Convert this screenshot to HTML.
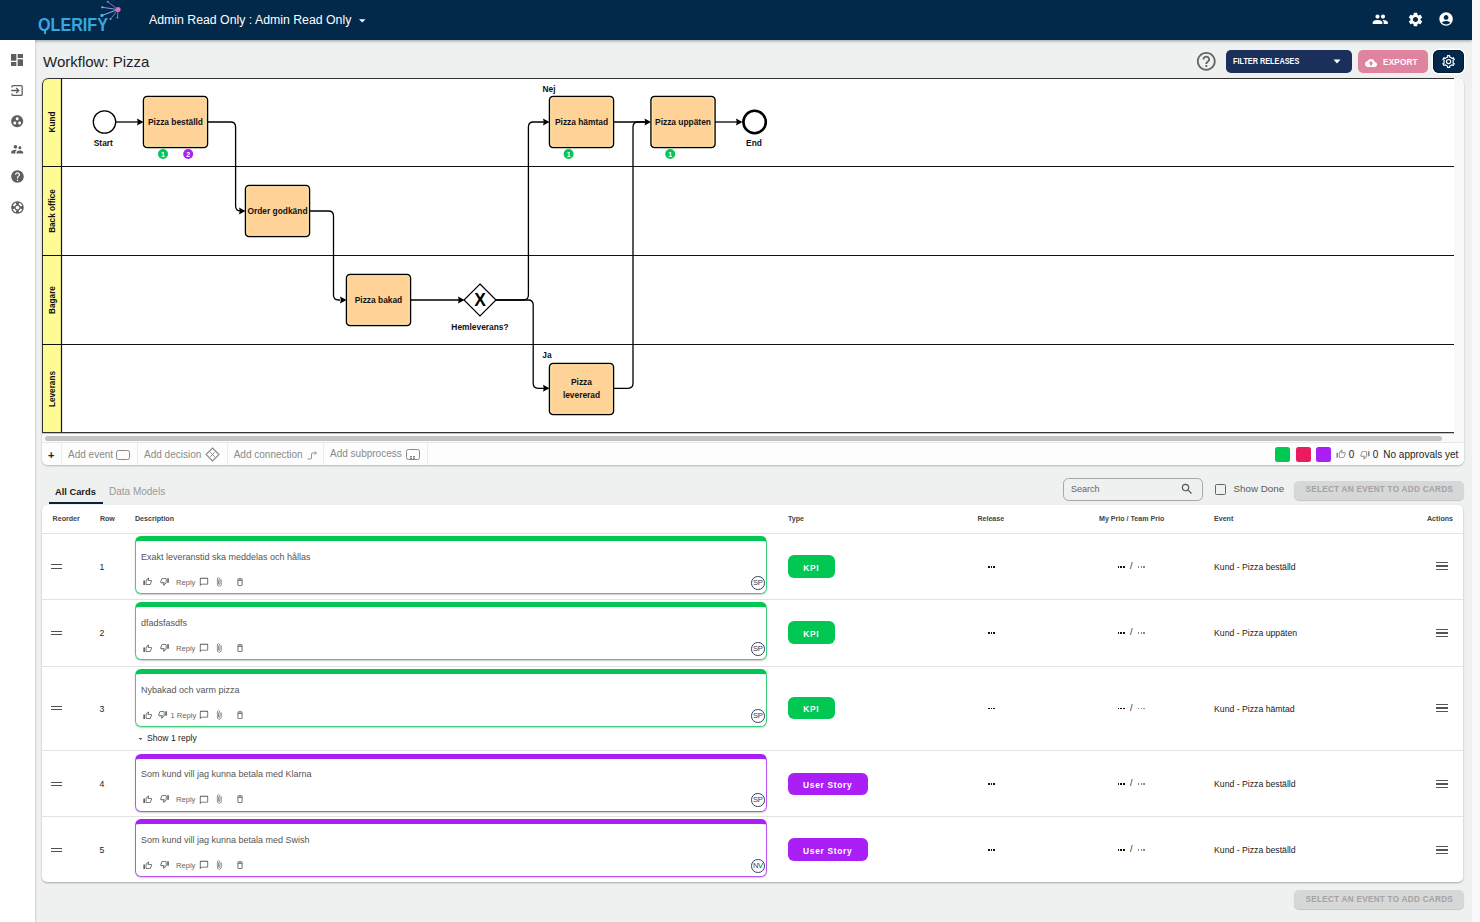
<!DOCTYPE html>
<html><head><meta charset="utf-8">
<style>
*{box-sizing:border-box;margin:0;padding:0}
html,body{-webkit-font-smoothing:antialiased;width:1480px;height:922px;overflow:hidden;background:#eff0f0;font-family:"Liberation Sans",sans-serif;color:#222;position:relative}
.abs{position:absolute}
.nowrap{white-space:nowrap}
#hdr{position:absolute;left:0;top:0;width:1472px;height:40px;background:#03294a;box-shadow:0 1px 3px rgba(0,0,0,.35);z-index:2}
#strip{position:absolute;left:1472px;top:0;width:8px;height:922px;background:#f9f9f9;z-index:3}
#side{position:absolute;left:0;top:40px;width:35px;height:882px;background:#fff;box-shadow:1px 0 2px rgba(0,0,0,.12);z-index:3}
.tb{font-size:10px;line-height:12px;color:#8a8a8a}
.btxt{font-size:8.2px;line-height:10px;font-weight:bold;color:#a3a3a3;letter-spacing:0.26px}
.th{font-size:7.1px;line-height:10px;font-weight:bold;color:#444}
.td{font-size:8.7px;line-height:10px;color:#222}
.ct{font-size:9px;line-height:10px;color:#555}
.rp{font-size:7.6px;line-height:10px;color:#666}
.sr{font-size:8.6px;line-height:10px;color:#222}
.av{width:13.5px;height:13.5px;border:1.1px solid #2b4160;border-radius:50%;font-size:7.6px;line-height:11.3px;text-align:center;color:#2b4160;letter-spacing:-0.4px}
.chip{height:22.5px;border-radius:6px;color:#fff;font-weight:bold;font-size:8.4px;line-height:22.5px;padding-top:1.5px;text-align:center;letter-spacing:0.7px}
.dots{height:2px;width:8px}
.dots i{position:absolute;top:0;width:1.5px;height:1.7px;background:#111}
.dots i:nth-child(1){left:0}.dots i:nth-child(2){left:2.7px}.dots i:nth-child(3){left:5.4px}
.dots.g i{background:#888;width:1.3px}

</style></head>
<body>
<div id="strip"></div>
<div id="hdr">
  <div class="abs nowrap" style="left:37.5px;top:13px;font-size:19px;font-weight:bold;color:#3aa6e0;line-height:24px;transform:scaleX(0.85);transform-origin:0 0">OLERIFY</div>
  <div class="abs" style="left:43.6px;top:30px;width:2.4px;height:3.6px;background:#3aa6e0"></div>
  <svg class="abs" style="left:95px;top:0" width="30" height="25" viewBox="95 0 30 25">
    <g stroke-linecap="round">
      <line x1="118" y1="9.6" x2="107.7" y2="1.6" stroke="#8a6fc0" stroke-width="1"/>
      <line x1="118" y1="9.6" x2="102.3" y2="7.3" stroke="#7f9be0" stroke-width="1"/>
      <line x1="118" y1="9.6" x2="101.8" y2="15.5" stroke="#7fa5e6" stroke-width="1.1"/>
      <line x1="118" y1="9.6" x2="110.5" y2="19" stroke="#6f86d0" stroke-width="0.9"/>
      <line x1="118" y1="9.6" x2="117.5" y2="17.6" stroke="#9a6fc0" stroke-width="0.9"/>
    </g>
    <circle cx="107.7" cy="1.8" r="1" fill="#9d7fd0"/>
    <circle cx="102.3" cy="7.3" r="1.1" fill="#8fb0f0"/>
    <circle cx="101.9" cy="15.4" r="1.6" fill="#45b4f0"/>
    <circle cx="110.5" cy="19" r="0.9" fill="#8fa5e6"/>
    <circle cx="117.5" cy="17.6" r="0.9" fill="#b98ad6"/>
    <circle cx="118.1" cy="9.6" r="2.5" fill="#e06cb5"/>
  </svg>
  <div class="abs nowrap" style="left:149px;top:12px;font-size:12.3px;color:#fff;line-height:16px">Admin Read Only : Admin Read Only</div>
  <svg class="abs" style="left:358.5px;top:19px" width="7" height="4" viewBox="0 0 7 4"><path d="M0 0.2h6.5L3.25 3.5z" fill="#fff"/></svg>
  <!-- people -->
  <svg class="abs" style="left:1371.5px;top:11px" width="16.5" height="16.5" viewBox="0 0 24 24"><path fill="#fff" d="M16 11c1.66 0 2.99-1.34 2.99-3S17.66 5 16 5c-1.66 0-3 1.34-3 3s1.34 3 3 3zm-8 0c1.66 0 2.99-1.34 2.99-3S9.66 5 8 5C6.34 5 5 6.34 5 8s1.34 3 3 3zm0 2c-2.33 0-7 1.17-7 3.5V19h14v-2.5c0-2.33-4.67-3.5-7-3.5zm8 0c-.29 0-.62.02-.97.05 1.16.84 1.97 1.97 1.97 3.45V19h6v-2.5c0-2.33-4.67-3.5-7-3.5z"/></svg>
  <!-- gear -->
  <svg class="abs" style="left:1406.5px;top:10.5px" width="17" height="17" viewBox="0 0 24 24"><path fill="#fff" d="M19.14 12.94c.04-.3.06-.61.06-.94 0-.32-.02-.64-.07-.94l2.03-1.58c.18-.14.23-.41.12-.61l-1.92-3.32c-.12-.22-.37-.29-.59-.22l-2.39.96c-.5-.38-1.03-.7-1.62-.94l-.36-2.54c-.04-.24-.24-.41-.48-.41h-3.84c-.24 0-.43.17-.47.41l-.36 2.54c-.59.24-1.13.57-1.62.94l-2.39-.96c-.22-.08-.47 0-.59.22L2.74 8.87c-.12.21-.08.47.12.61l2.03 1.58c-.05.3-.09.63-.09.94s.02.64.07.94l-2.03 1.58c-.18.14-.23.41-.12.61l1.92 3.32c.12.22.37.29.59.22l2.39-.96c.5.38 1.03.7 1.62.94l.36 2.54c.05.24.24.41.48.41h3.84c.24 0 .44-.17.47-.41l.36-2.54c.59-.24 1.13-.56 1.62-.94l2.39.96c.22.08.47 0 .59-.22l1.92-3.32c.12-.22.07-.47-.12-.61l-2.01-1.58zM12 15.6c-1.98 0-3.6-1.62-3.6-3.6s1.62-3.6 3.6-3.6 3.6 1.62 3.6 3.6-1.62 3.6-3.6 3.6z"/></svg>
  <!-- account -->
  <svg class="abs" style="left:1437.8px;top:11px" width="16.2" height="16.2" viewBox="0 0 24 24"><path fill="#fff" d="M12 2C6.48 2 2 6.48 2 12s4.48 10 10 10 10-4.48 10-10S17.52 2 12 2zm0 4c1.93 0 3.5 1.57 3.5 3.5S13.93 13 12 13s-3.5-1.57-3.5-3.5S10.07 6 12 6zm0 14c-2.03 0-4.43-.82-6.14-2.88C7.55 15.8 9.68 15 12 15s4.45.8 6.14 2.12C16.43 19.18 14.03 20 12 20z"/></svg>
</div>

<div id="side">
  <svg class="abs" style="left:9px;top:12px" width="16" height="16" viewBox="0 0 24 24"><path fill="#5f5f5f" d="M3 13h8V3H3v10zm0 8h8v-6H3v6zm10 0h8V11h-8v10zm0-18v6h8V3h-8z"/></svg>
  <svg class="abs" style="left:10px;top:44px" width="14" height="13" viewBox="10 84 14 13"><path d="M12 87.6 V86.5 Q12 85.6 12.9 85.6 H21.3 Q22.2 85.6 22.2 86.5 V94.5 Q22.2 95.4 21.3 95.4 H12.9 Q12 95.4 12 94.5 V93.4" fill="none" stroke="#5f5f5f" stroke-width="1.3"/><path d="M11.2 90.5 H18.6 M16.2 88 L18.8 90.5 L16.2 93" fill="none" stroke="#5f5f5f" stroke-width="1.3"/></svg>
  <svg class="abs" style="left:9.8px;top:73.8px" width="14.4" height="14.4" viewBox="0 0 24 24"><path fill="#5f5f5f" d="M12 2C6.48 2 2 6.48 2 12s4.48 10 10 10 10-4.48 10-10S17.52 2 12 2zM8 17.5c-1.38 0-2.5-1.12-2.5-2.5s1.12-2.5 2.5-2.5 2.5 1.12 2.5 2.5-1.12 2.5-2.5 2.5zM9.5 8c0-1.38 1.12-2.5 2.5-2.5s2.5 1.12 2.5 2.5-1.12 2.5-2.5 2.5S9.5 9.38 9.5 8zm6.5 9.5c-1.38 0-2.5-1.12-2.5-2.5s1.12-2.5 2.5-2.5 2.5 1.12 2.5 2.5-1.12 2.5-2.5 2.5z"/></svg>
  <svg class="abs" style="left:9.8px;top:101.5px" width="14.4" height="14.4" viewBox="0 0 24 24"><path fill="#5f5f5f" d="M16.5 12c1.38 0 2.49-1.12 2.49-2.5S17.88 7 16.5 7C15.12 7 14 8.12 14 9.5s1.12 2.5 2.5 2.5zM9 11c1.66 0 2.99-1.34 2.99-3S10.66 5 9 5C7.34 5 6 6.34 6 8s1.34 3 3 3zm7.5 3c-1.83 0-5.5.92-5.5 2.75V19h11v-2.25c0-1.83-3.67-2.75-5.5-2.75zM9 13c-2.33 0-7 1.17-7 3.5V19h7v-2.25c0-.85.33-2.34 2.37-3.47C10.5 13.1 9.66 13 9 13z"/></svg>
  <svg class="abs" style="left:9.5px;top:129px" width="15" height="15" viewBox="0 0 24 24"><path fill="#5f5f5f" d="M12 2C6.48 2 2 6.48 2 12s4.48 10 10 10 10-4.48 10-10S17.52 2 12 2zm1 17h-2v-2h2v2zm2.07-7.75l-.9.92C13.45 12.9 13 13.5 13 15h-2v-.5c0-1.1.45-2.1 1.170-2.83l1.24-1.26c.37-.36.59-.86.59-1.41 0-1.1-.9-2-2-2s-2 .9-2 2H8c0-2.21 1.79-4 4-4s4 1.79 4 4c0 .88-.36 1.68-.93 2.25z"/></svg>
  <svg class="abs" style="left:9.5px;top:159.5px" width="15" height="15" viewBox="0 0 24 24"><path fill="#5f5f5f" d="M12 2C6.48 2 2 6.48 2 12s4.48 10 10 10 10-4.48 10-10S17.52 2 12 2zm7.46 7.12l-2.78 1.15c-.51-1.36-1.58-2.440-2.95-2.94l1.15-2.78c2.1.8 3.770 2.47 4.58 4.57zM12 15c-1.66 0-3-1.34-3-3s1.34-3 3-3 3 1.34 3 3-1.34 3-3 3zM9.13 4.54l1.17 2.78c-1.38.5-2.47 1.59-2.98 2.97L4.54 9.13c.81-2.11 2.48-3.78 4.59-4.59zM4.54 14.87l2.78-1.15c.51 1.38 1.59 2.46 2.97 2.96l-1.17 2.78c-2.1-.81-3.77-2.48-4.58-4.59zm10.34 4.59l-1.15-2.78c1.37-.51 2.45-1.59 2.95-2.97l2.78 1.17c-.81 2.1-2.48 3.77-4.58 4.58z"/></svg>
</div>

<div class="abs nowrap" style="left:43px;top:52px;font-size:15px;line-height:20px;color:#222">Workflow: Pizza</div>
<svg class="abs" style="left:1195.4px;top:49.9px" width="22.6" height="22.6" viewBox="0 0 24 24"><path fill="#666" d="M11 18h2v-2h-2v2zm1-16C6.48 2 2 6.48 2 12s4.48 10 10 10 10-4.48 10-10S17.52 2 12 2zm0 18c-4.41 0-8-3.59-8-8s3.59-8 8-8 8 3.59 8 8-3.590 8-8 8zm0-14c-2.21 0-4 1.79-4 4h2c0-1.1.9-2 2-2s2 .9 2 2c0 2-3 1.75-3 5h2c0-2.25 3-2.5 3-5 0-2.21-1.79-4-4-4z"/></svg>
<div class="abs" style="left:1226px;top:50px;width:126px;height:23px;background:#1b2f5b;border-radius:5px"></div>
<div class="abs nowrap" style="left:1233.3px;top:57.3px;font-size:8.2px;line-height:10px;font-weight:bold;color:#fff;letter-spacing:0px;transform:scaleX(0.89);transform-origin:0 0">FILTER RELEASES</div>
<svg class="abs" style="left:1333px;top:59px" width="8" height="5" viewBox="0 0 8 5"><path d="M0.5 0.5h7L4 4.5z" fill="#fff"/></svg>
<div class="abs" style="left:1358px;top:50px;width:70px;height:23px;background:#e0839f;border-radius:5px"></div>
<svg class="abs" style="left:1365px;top:56.6px" width="12" height="12" viewBox="0 0 24 24"><path fill="#fff" d="M19.35 10.04C18.67 6.59 15.64 4 12 4 9.11 4 6.6 5.64 5.35 8.04 2.34 8.36 0 10.91 0 14c0 3.31 2.69 6 6 6h13c2.76 0 5-2.24 5-5 0-2.64-2.05-4.78-4.65-4.96zM14 13v4h-4v-4H7l5-5 5 5h-3z"/></svg>
<div class="abs nowrap" style="left:1382.7px;top:56.8px;font-size:8.9px;line-height:10px;font-weight:bold;color:#fff;letter-spacing:0.15px;transform:scaleX(0.93);transform-origin:0 0">EXPORT</div>
<div class="abs" style="left:1433px;top:50px;width:30.5px;height:23px;background:#03294a;border-radius:6px;box-shadow:0 0 0 1.4px #fff, inset 0 0 0 1px #001c36"></div>
<svg class="abs" style="left:1441.7px;top:54.7px" width="13.2" height="13.2" viewBox="0 0 13.2 13.2"><path d="M4.73 2.40 L5.57 2.12 L5.54 0.59 L7.66 0.59 L7.63 2.12 L8.47 2.40 L9.30 2.88 L9.96 3.46 L11.27 2.68 L12.33 4.51 L11.00 5.26 L11.17 6.12 L11.17 7.08 L11.00 7.94 L12.33 8.69 L11.27 10.52 L9.96 9.74 L9.30 10.32 L8.47 10.80 L7.63 11.08 L7.66 12.61 L5.54 12.61 L5.57 11.08 L4.73 10.80 L3.90 10.32 L3.24 9.74 L1.93 10.52 L0.87 8.69 L2.20 7.94 L2.03 7.08 L2.03 6.12 L2.20 5.26 L0.87 4.51 L1.93 2.68 L3.24 3.46 L3.90 2.88 Z" fill="none" stroke="#fff" stroke-width="1.15" stroke-linejoin="round"/><circle cx="6.6" cy="6.6" r="2.1" fill="none" stroke="#fff" stroke-width="1.15"/></svg>

<div class="abs" style="left:42px;top:78px;width:1421.5px;height:387px;background:#f9f9f9;border-radius:6px;box-shadow:0 1px 2px rgba(0,0,0,.25)"></div>
<div class="abs" style="left:42px;top:443px;width:1421.5px;height:22px;background:#fdfdfd;border-radius:0 0 6px 6px"></div>
<svg class="abs" style="left:42px;top:78px" width="1412" height="356" viewBox="42 78 1412 356" font-family="Liberation Sans, sans-serif">
  <path d="M42 84.5 Q42 78 48.5 78 H1454 V433 H42 Z" fill="#fff"/>
  <path d="M42.5 432.5 V85 Q42.5 78.5 49 78.5 H61.5 V432.5 Z" fill="#fffb94"/>
  <g stroke="#111" fill="none">
    <path d="M42.5 432.5 V85 Q42.5 78.5 49 78.5 H1454" stroke="#333" stroke-width="1"/>
    <line x1="61.5" y1="78.5" x2="61.5" y2="432.5" stroke-width="1.2"/>
    <line x1="42" y1="166.5" x2="1454" y2="166.5" stroke-width="1.2"/>
    <line x1="42" y1="255.5" x2="1454" y2="255.5" stroke-width="1.2"/>
    <line x1="42" y1="344.5" x2="1454" y2="344.5" stroke-width="1.2"/>
    <line x1="42" y1="432.6" x2="1454" y2="432.6" stroke="#333" stroke-width="1.2"/>
  </g>
  <g font-weight="bold" font-size="8.2" fill="#111" text-anchor="middle">
    <text transform="translate(55.3 122) rotate(-90)">Kund</text>
    <text transform="translate(55.3 211) rotate(-90)">Back office</text>
    <text transform="translate(55.3 300) rotate(-90)">Bagare</text>
    <text transform="translate(55.3 389) rotate(-90)">Leverans</text>
  </g>
  <!-- connectors -->
  <g stroke="#000" stroke-width="1.3" fill="none">
    <path d="M116 122 H138"/>
    <path d="M207.5 122 H230.6 Q235.6 122 235.6 127 V206 Q235.6 211 240.6 211"/>
    <path d="M309 211 H328.5 Q333.5 211 333.5 216 V295 Q333.5 300 338.5 300 H340"/>
    <path d="M410.5 300 H459"/>
    <path d="M495.6 300 H523.4 Q528.4 300 528.4 295 V127 Q528.4 122 533.4 122 H544"/>
    <path d="M495.6 300 H528.2 Q533.2 300 533.2 305 V383.3 Q533.2 388.3 538.2 388.3 H544"/>
    <path d="M613.5 122 H646"/>
    <path d="M613.5 388.3 H628 Q633 388.3 633 383.3 V127 Q633 122 638 122 H646"/>
    <path d="M715 122 H737"/>
  </g>
  <g fill="#000">
    <path d="M137 118.5 L143.5 122 L137 125.5 L137.8 122 Z"/>
    <path d="M239 207.5 L245.5 211 L239 214.5 L239.8 211 Z"/>
    <path d="M340 296.5 L346.5 300 L340 303.5 L340.8 300 Z"/>
    <path d="M458 296.5 L464.5 300 L458 303.5 L458.8 300 Z"/>
    <path d="M543 118.5 L549.5 122 L543 125.5 L543.8 122 Z"/>
    <path d="M543 384.8 L549.5 388.3 L543 391.8 L543.8 388.3 Z"/>
    <path d="M644.5 118.5 L651 122 L644.5 125.5 L645.3 122 Z"/>
    <path d="M736 118.5 L742.5 122 L736 125.5 L736.8 122 Z"/>
  </g>
  <!-- events -->
  <circle cx="104.5" cy="122" r="11.2" fill="#fff" stroke="#000" stroke-width="1.3"/>
  <circle cx="754.6" cy="122" r="11.2" fill="#fff" stroke="#000" stroke-width="2.6"/>
  <!-- tasks -->
  <g fill="#ffd398" stroke="#000" stroke-width="1.5">
    <rect x="143.5" y="96.5" width="64" height="51" rx="3.5"/>
    <rect x="245.5" y="185.5" width="64" height="51" rx="3.5"/>
    <rect x="346.5" y="274.5" width="64" height="51" rx="3.5"/>
    <rect x="549.5" y="96.5" width="64" height="51" rx="3.5"/>
    <rect x="651" y="96.5" width="64" height="51" rx="3.5"/>
    <rect x="549.5" y="363.5" width="64" height="51" rx="3.5"/>
  </g>

  <g fill="none" stroke="#fff2b0" stroke-width="0.8">
    <rect x="144.7" y="97.7" width="61.6" height="48.6" rx="2.5"/>
    <rect x="246.7" y="186.7" width="61.6" height="48.6" rx="2.5"/>
    <rect x="347.7" y="275.7" width="61.6" height="48.6" rx="2.5"/>
    <rect x="550.7" y="97.7" width="61.6" height="48.6" rx="2.5"/>
    <rect x="652.2" y="97.7" width="61.6" height="48.6" rx="2.5"/>
    <rect x="550.7" y="364.7" width="61.6" height="48.6" rx="2.5"/>
  </g>
  <path d="M480 284 L496 300 L480 316 L464 300 Z" fill="#fff" stroke="#000" stroke-width="1.2"/>
  <text x="480.1" y="305.9" font-size="17.5" font-weight="bold" text-anchor="middle" fill="#000">X</text>
  <g font-weight="bold" font-size="8.4" fill="#111" text-anchor="middle">
    <text x="175.5" y="125">Pizza beställd</text>
    <text x="277.5" y="214">Order godkänd</text>
    <text x="378.5" y="303">Pizza bakad</text>
    <text x="581.5" y="125">Pizza hämtad</text>
    <text x="683" y="125">Pizza uppäten</text>
    <text x="581.5" y="384.5">Pizza</text>
    <text x="581.5" y="398">levererad</text>
    <text x="103.3" y="145.6">Start</text>
    <text x="754" y="146">End</text>
    <text x="480" y="329.8">Hemleverans?</text>
    <text x="549" y="92">Nej</text>
    <text x="547" y="358">Ja</text>
  </g>
  <g>
    <circle cx="163" cy="154" r="5" fill="#00c853"/>
    <circle cx="188.2" cy="154" r="5" fill="#aa1ff5"/>
    <circle cx="568.6" cy="154" r="5" fill="#00c853"/>
    <circle cx="670.2" cy="154" r="5" fill="#00c853"/>
  </g>
  <g font-weight="bold" font-size="7" fill="#fff" text-anchor="middle">
    <text x="163" y="156.6">1</text>
    <text x="188.2" y="156.6">2</text>
    <text x="568.6" y="156.6">1</text>
    <text x="670.2" y="156.6">1</text>
  </g>
</svg>
<div class="abs" style="left:45px;top:436px;width:1397px;height:4.5px;background:#c4c4c4;border-radius:3px"></div>
<div class="abs" style="left:42px;top:442px;width:1421px;height:1px;background:#e8e8e8"></div>

<div class="abs nowrap" style="left:48px;top:449px;font-size:11px;line-height:12px;color:#222;font-weight:bold">+</div>
<div class="abs" style="left:61px;top:443px;width:1px;height:22px;background:#ececec"></div>
<div class="abs" style="left:137px;top:443px;width:1px;height:22px;background:#ececec"></div>
<div class="abs" style="left:226.5px;top:443px;width:1px;height:22px;background:#ececec"></div>
<div class="abs" style="left:323px;top:443px;width:1px;height:22px;background:#ececec"></div>
<div class="abs" style="left:427px;top:443px;width:1px;height:22px;background:#ececec"></div>
<div class="abs nowrap tb" style="left:68px;top:448.8px">Add event</div>
<div class="abs" style="left:116px;top:449.5px;width:14px;height:10.5px;border:1.3px solid #888;border-radius:2.5px"></div>
<div class="abs nowrap tb" style="left:144px;top:448.8px">Add decision</div>
<svg class="abs" style="left:205px;top:447px" width="15" height="15" viewBox="0 0 15 15"><path d="M7.5 1 L14 7.5 L7.5 14 L1 7.5 Z" fill="none" stroke="#888" stroke-width="1.1"/><path d="M5.3 5.3 L9.7 9.7 M9.7 5.3 L5.3 9.7" stroke="#888" stroke-width="1"/></svg>
<div class="abs nowrap tb" style="left:233.7px;top:448.8px">Add connection</div>
<svg class="abs" style="left:307px;top:451px" width="10" height="9" viewBox="0 0 10 9"><path d="M0.5 8 H3.5 Q4.5 8 4.5 7 V3 Q4.5 2 5.5 2 H8.5" fill="none" stroke="#888" stroke-width="0.9"/><path d="M7.5 0.5 L9.5 2 L7.5 3.5" fill="none" stroke="#888" stroke-width="0.9"/></svg>
<div class="abs nowrap tb" style="left:330px;top:447.8px">Add subprocess</div>
<div class="abs" style="left:406px;top:449.3px;width:13.5px;height:10.7px;border:1.3px solid #888;border-radius:2.5px"></div>
<svg class="abs" style="left:409px;top:454.5px" width="7" height="5" viewBox="0 0 7 5"><path d="M1 1h2v1.5H1zM4 1h2v1.5H4zM1 3h2v1.5H1zM4 3h2v1.5H4z" fill="#888"/></svg>

<div class="abs" style="left:1275px;top:447px;width:15px;height:15px;background:#00c853;border-radius:2.5px"></div>
<div class="abs" style="left:1295.5px;top:447px;width:15px;height:15px;background:#ea1c60;border-radius:2.5px"></div>
<div class="abs" style="left:1316px;top:447px;width:15px;height:15px;background:#aa1ff5;border-radius:2.5px"></div>
<svg class="abs" style="left:1336.4px;top:449px" width="10" height="10" viewBox="0 0 24 24"><path fill="#888" d="M9 21h9c.83 0 1.54-.5 1.84-1.22l3.02-7.05c.09-.23.14-.47.14-.73v-2c0-1.1-.9-2-2-2h-6.31l.95-4.57.03-.32c0-.41-.17-.79-.44-1.06L14.17 1 7.58 7.59C7.22 7.95 7 8.45 7 9v10c0 1.1.9 2 2 2zM9 9l4.34-4.34L12 10h9v2l-3 7H9V9zM1 9h4v12H1z"/></svg>
<div class="abs nowrap" style="left:1348.8px;top:449px;font-size:10px;line-height:12px;color:#222">0</div>
<svg class="abs" style="left:1359.8px;top:449.5px" width="10" height="10" viewBox="0 0 24 24"><path fill="#888" d="M15 3H6c-.83 0-1.54.5-1.84 1.22l-3.02 7.05c-.09.23-.14.47-.14.73v2c0 1.1.9 2 2 2h6.31l-.95 4.57-.03.32c0 .41.17.79.44 1.06L9.83 23l6.59-6.59c.36-.36.58-.86.58-1.41V5c0-1.1-.9-2-2-2zm0 12l-4.34 4.34L12 14H3v-2l3-7h9v10zm4-12h4v12h-4z"/></svg>
<div class="abs nowrap" style="left:1372.8px;top:449px;font-size:10px;line-height:12px;color:#222">0</div>
<div class="abs nowrap" style="left:1383.3px;top:449px;font-size:10px;line-height:12px;color:#222">No approvals yet</div>

<!-- tabs & search -->
<div class="abs nowrap" style="left:55px;top:486px;font-size:9.3px;line-height:12px;color:#1a1a1a;font-weight:bold">All Cards</div>
<div class="abs nowrap" style="left:109px;top:486px;font-size:10px;line-height:12px;color:#999">Data Models</div>
<div class="abs" style="left:49px;top:501.5px;width:54px;height:2px;background:#0c2340"></div>
<div class="abs" style="left:1063.2px;top:478px;width:139.5px;height:22.8px;border:1px solid #a6a6a6;border-radius:5.5px"></div>
<div class="abs nowrap" style="left:1071px;top:484.3px;font-size:9px;line-height:10px;color:#666">Search</div>
<svg class="abs" style="left:1180px;top:482px" width="14" height="14" viewBox="0 0 24 24"><path fill="#555" d="M15.5 14h-.79l-.28-.27C15.41 12.59 16 11.11 16 9.5 16 5.91 13.09 3 9.5 3S3 5.91 3 9.5 5.91 16 9.5 16c1.61 0 3.09-.59 4.23-1.57l.27.28v.79l5 4.99L20.49 19l-4.99-5zm-6 0C7.01 14 5 11.99 5 9.5S7.01 5 9.5 5 14 7.01 14 9.5 11.99 14 9.5 14z"/></svg>
<div class="abs" style="left:1215px;top:484px;width:11px;height:11px;border:1.4px solid #666;border-radius:1.5px"></div>
<div class="abs nowrap" style="left:1233.5px;top:483px;font-size:9.8px;line-height:12px;color:#5c5c5c">Show Done</div>
<div class="abs" style="left:1294px;top:480.5px;width:170px;height:19px;background:#d6d7d7;border-radius:5px;box-shadow:0 1px 1px rgba(0,0,0,.18)"></div>
<div class="abs nowrap btxt" style="left:1305.5px;top:485px">SELECT AN EVENT TO ADD CARDS</div>

<div class="abs" style="left:42px;top:504.5px;width:1421px;height:377.5px;background:#fff;border-radius:5px;box-shadow:0 1px 2px rgba(0,0,0,.3)"></div>
<div class="abs nowrap th" style="left:52.6px;top:514px">Reorder</div>
<div class="abs nowrap th" style="left:99.9px;top:514px">Row</div>
<div class="abs nowrap th" style="left:135px;top:514px">Description</div>
<div class="abs nowrap th" style="left:788px;top:514px">Type</div>
<div class="abs nowrap th" style="left:977.4px;top:514px">Release</div>
<div class="abs nowrap th" style="left:1099px;top:514px">My Prio / Team Prio</div>
<div class="abs nowrap th" style="left:1214px;top:514px">Event</div>
<div class="abs nowrap th" style="left:1353px;top:514px;width:100px;text-align:right">Actions</div>
<div class="abs" style="left:42px;top:532.5px;width:1421px;height:1px;background:#e3e3e3"></div>
<div class="abs" style="left:51px;top:564px;width:11px;height:1.3px;background:#505050"></div>
<div class="abs" style="left:51px;top:568px;width:11px;height:1.3px;background:#505050"></div>
<div class="abs nowrap td" style="left:98px;top:562.0px;width:8px;text-align:center">1</div>
<div class="abs" style="left:135px;top:536.2px;width:632px;height:58px;border:1px solid rgba(0,190,80,.75);border-bottom-width:1.5px;border-top:5px solid #00c853;border-radius:6px;box-shadow:0 1px 1.5px rgba(0,0,0,.2)"></div>
<div class="abs nowrap ct" style="left:141px;top:552px">Exakt leveranstid ska meddelas och hållas</div>
<svg class="abs" style="left:142.6px;top:577.4px" width="9.2" height="9.2" viewBox="0 0 24 24"><path fill="#555" d="M9 21h9c.83 0 1.54-.5 1.84-1.22l3.02-7.05c.09-.23.14-.47.14-.73v-2c0-1.1-.9-2-2-2h-6.31l.95-4.57.03-.32c0-.41-.17-.79-.44-1.06L14.17 1 7.58 7.59C7.22 7.95 7 8.45 7 9v10c0 1.1.9 2 2 2zM9 9l4.34-4.34L12 10h9v2l-3 7H9V9zM1 9h4v12H1z"/></svg>
<svg class="abs" style="left:160.4px;top:576.9px" width="9.2" height="9.2" viewBox="0 0 24 24"><path fill="#555" d="M15 3H6c-.83 0-1.54.5-1.84 1.22l-3.02 7.05c-.09.23-.14.47-.14.73v2c0 1.1.9 2 2 2h6.31l-.95 4.57-.03.32c0 .41.17.79.44 1.06L9.83 23l6.59-6.59c.36-.36.58-.86.58-1.41V5c0-1.1-.9-2-2-2zm0 12l-4.34 4.34L12 14H3v-2l3-7h9v10zm4-12h4v12h-4z"/></svg>
<div class="abs nowrap rp" style="left:176px;top:577.5px">Reply</div>
<svg class="abs" style="left:198.8px;top:577.2px" width="10" height="10" viewBox="0 0 24 24"><path fill="#555" d="M20 2H4c-1.1 0-2 .9-2 2v18l4-4h14c1.1 0 2-.9 2-2V4c0-1.1-.9-2-2-2zm0 14H6l-2 2V4h16v12z"/></svg>
<svg class="abs" style="left:213.5px;top:577px" width="10" height="10" viewBox="0 0 24 24"><path fill="#555" d="M16.5 6v11.5c0 2.21-1.79 4-4 4s-4-1.79-4-4V5c0-1.38 1.12-2.5 2.5-2.5s2.5 1.12 2.5 2.5v10.5c0 .55-.45 1-1 1s-1-.45-1-1V6H10v9.5c0 1.38 1.12 2.5 2.5 2.5s2.5-1.12 2.5-2.5V5c0-2.21-1.79-4-4-4S7 2.79 7 5v12.5c0 3.04 2.46 5.5 5.5 5.5s5.5-2.46 5.5-5.5V6h-1.5z"/></svg>
<svg class="abs" style="left:234.5px;top:577px" width="10" height="10" viewBox="0 0 24 24"><path fill="#555" d="M6 19c0 1.1.9 2 2 2h8c1.1 0 2-.9 2-2V7H6v12zM8 9h8v10H8V9zm7.5-5l-1-1h-5l-1 1H5v2h14V4z"/></svg>
<div class="abs av" style="left:751px;top:576px">SP</div>
<div class="abs chip" style="left:787.5px;top:555.2px;width:47.5px;background:#00c853">KPI</div>
<div class="abs dots" style="left:988px;top:566.0px"><i></i><i></i><i></i></div>
<div class="abs dots" style="left:1117.8px;top:566.0px"><i></i><i></i><i></i></div>
<div class="abs nowrap" style="left:1130px;top:562.0px;font-size:9px;line-height:9px;color:#222">/</div>
<div class="abs dots g" style="left:1138px;top:566.0px"><i></i><i></i><i></i></div>
<div class="abs nowrap td" style="left:1214px;top:562.0px">Kund - Pizza beställd</div>
<div class="abs" style="left:1436px;top:562.0px;width:11.6px;height:1.3px;background:#555"></div>
<div class="abs" style="left:1436px;top:565.3px;width:11.6px;height:1.3px;background:#555"></div>
<div class="abs" style="left:1436px;top:568.6px;width:11.6px;height:1.3px;background:#555"></div>
<div class="abs" style="left:42px;top:598.7px;width:1421px;height:1px;background:#e3e3e3"></div>
<div class="abs" style="left:51px;top:631px;width:11px;height:1.3px;background:#505050"></div>
<div class="abs" style="left:51px;top:634px;width:11px;height:1.3px;background:#505050"></div>
<div class="abs nowrap td" style="left:98px;top:628.2px;width:8px;text-align:center">2</div>
<div class="abs" style="left:135px;top:602.4000000000001px;width:632px;height:58px;border:1px solid rgba(0,190,80,.75);border-bottom-width:1.5px;border-top:5px solid #00c853;border-radius:6px;box-shadow:0 1px 1.5px rgba(0,0,0,.2)"></div>
<div class="abs nowrap ct" style="left:141px;top:618.2px">dfadsfasdfs</div>
<svg class="abs" style="left:142.6px;top:643.6px" width="9.2" height="9.2" viewBox="0 0 24 24"><path fill="#555" d="M9 21h9c.83 0 1.54-.5 1.84-1.22l3.02-7.05c.09-.23.14-.47.14-.73v-2c0-1.1-.9-2-2-2h-6.31l.95-4.57.03-.32c0-.41-.17-.79-.44-1.06L14.17 1 7.58 7.59C7.22 7.95 7 8.45 7 9v10c0 1.1.9 2 2 2zM9 9l4.34-4.34L12 10h9v2l-3 7H9V9zM1 9h4v12H1z"/></svg>
<svg class="abs" style="left:160.4px;top:643.1px" width="9.2" height="9.2" viewBox="0 0 24 24"><path fill="#555" d="M15 3H6c-.83 0-1.54.5-1.84 1.22l-3.02 7.05c-.09.23-.14.47-.14.73v2c0 1.1.9 2 2 2h6.31l-.95 4.57-.03.32c0 .41.17.79.44 1.06L9.83 23l6.59-6.59c.36-.36.58-.86.58-1.41V5c0-1.1-.9-2-2-2zm0 12l-4.34 4.34L12 14H3v-2l3-7h9v10zm4-12h4v12h-4z"/></svg>
<div class="abs nowrap rp" style="left:176px;top:643.7px">Reply</div>
<svg class="abs" style="left:198.8px;top:643.4000000000001px" width="10" height="10" viewBox="0 0 24 24"><path fill="#555" d="M20 2H4c-1.1 0-2 .9-2 2v18l4-4h14c1.1 0 2-.9 2-2V4c0-1.1-.9-2-2-2zm0 14H6l-2 2V4h16v12z"/></svg>
<svg class="abs" style="left:213.5px;top:643.2px" width="10" height="10" viewBox="0 0 24 24"><path fill="#555" d="M16.5 6v11.5c0 2.21-1.79 4-4 4s-4-1.79-4-4V5c0-1.38 1.12-2.5 2.5-2.5s2.5 1.12 2.5 2.5v10.5c0 .55-.45 1-1 1s-1-.45-1-1V6H10v9.5c0 1.38 1.12 2.5 2.5 2.5s2.5-1.12 2.5-2.5V5c0-2.21-1.79-4-4-4S7 2.79 7 5v12.5c0 3.04 2.46 5.5 5.5 5.5s5.5-2.46 5.5-5.5V6h-1.5z"/></svg>
<svg class="abs" style="left:234.5px;top:643.2px" width="10" height="10" viewBox="0 0 24 24"><path fill="#555" d="M6 19c0 1.1.9 2 2 2h8c1.1 0 2-.9 2-2V7H6v12zM8 9h8v10H8V9zm7.5-5l-1-1h-5l-1 1H5v2h14V4z"/></svg>
<div class="abs av" style="left:751px;top:642.2px">SP</div>
<div class="abs chip" style="left:787.5px;top:621.4000000000001px;width:47.5px;background:#00c853">KPI</div>
<div class="abs dots" style="left:988px;top:632.2px"><i></i><i></i><i></i></div>
<div class="abs dots" style="left:1117.8px;top:632.2px"><i></i><i></i><i></i></div>
<div class="abs nowrap" style="left:1130px;top:628.2px;font-size:9px;line-height:9px;color:#222">/</div>
<div class="abs dots g" style="left:1138px;top:632.2px"><i></i><i></i><i></i></div>
<div class="abs nowrap td" style="left:1214px;top:628.2px">Kund - Pizza uppäten</div>
<div class="abs" style="left:1436px;top:629.0px;width:11.6px;height:1.3px;background:#555"></div>
<div class="abs" style="left:1436px;top:632.3px;width:11.6px;height:1.3px;background:#555"></div>
<div class="abs" style="left:1436px;top:635.6px;width:11.6px;height:1.3px;background:#555"></div>
<div class="abs" style="left:42px;top:665.7px;width:1421px;height:1px;background:#e3e3e3"></div>
<div class="abs" style="left:51px;top:706px;width:11px;height:1.3px;background:#505050"></div>
<div class="abs" style="left:51px;top:709px;width:11px;height:1.3px;background:#505050"></div>
<div class="abs nowrap td" style="left:98px;top:703.5px;width:8px;text-align:center">3</div>
<div class="abs" style="left:135px;top:669.4000000000001px;width:632px;height:58px;border:1px solid rgba(0,190,80,.75);border-bottom-width:1.5px;border-top:5px solid #00c853;border-radius:6px;box-shadow:0 1px 1.5px rgba(0,0,0,.2)"></div>
<div class="abs nowrap ct" style="left:141px;top:685.2px">Nybakad och varm pizza</div>
<svg class="abs" style="left:142.6px;top:710.6px" width="9.2" height="9.2" viewBox="0 0 24 24"><path fill="#555" d="M9 21h9c.83 0 1.54-.5 1.84-1.22l3.02-7.05c.09-.23.14-.47.14-.73v-2c0-1.1-.9-2-2-2h-6.31l.95-4.57.03-.32c0-.41-.17-.79-.44-1.06L14.17 1 7.58 7.59C7.22 7.95 7 8.45 7 9v10c0 1.1.9 2 2 2zM9 9l4.34-4.34L12 10h9v2l-3 7H9V9zM1 9h4v12H1z"/></svg>
<svg class="abs" style="left:158.4px;top:710.1px" width="9.2" height="9.2" viewBox="0 0 24 24"><path fill="#555" d="M15 3H6c-.83 0-1.54.5-1.84 1.22l-3.02 7.05c-.09.23-.14.47-.14.73v2c0 1.1.9 2 2 2h6.31l-.95 4.57-.03.32c0 .41.17.79.44 1.06L9.83 23l6.59-6.59c.36-.36.58-.86.58-1.41V5c0-1.1-.9-2-2-2zm0 12l-4.34 4.34L12 14H3v-2l3-7h9v10zm4-12h4v12h-4z"/></svg>
<div class="abs nowrap rp" style="left:170.5px;top:710.7px">1 Reply</div>
<svg class="abs" style="left:198.8px;top:710.4000000000001px" width="10" height="10" viewBox="0 0 24 24"><path fill="#555" d="M20 2H4c-1.1 0-2 .9-2 2v18l4-4h14c1.1 0 2-.9 2-2V4c0-1.1-.9-2-2-2zm0 14H6l-2 2V4h16v12z"/></svg>
<svg class="abs" style="left:213.5px;top:710.2px" width="10" height="10" viewBox="0 0 24 24"><path fill="#555" d="M16.5 6v11.5c0 2.21-1.79 4-4 4s-4-1.79-4-4V5c0-1.38 1.12-2.5 2.5-2.5s2.5 1.12 2.5 2.5v10.5c0 .55-.45 1-1 1s-1-.45-1-1V6H10v9.5c0 1.38 1.12 2.5 2.5 2.5s2.5-1.12 2.5-2.5V5c0-2.21-1.79-4-4-4S7 2.79 7 5v12.5c0 3.04 2.46 5.5 5.5 5.5s5.5-2.46 5.5-5.5V6h-1.5z"/></svg>
<svg class="abs" style="left:234.5px;top:710.2px" width="10" height="10" viewBox="0 0 24 24"><path fill="#555" d="M6 19c0 1.1.9 2 2 2h8c1.1 0 2-.9 2-2V7H6v12zM8 9h8v10H8V9zm7.5-5l-1-1h-5l-1 1H5v2h14V4z"/></svg>
<div class="abs av" style="left:751px;top:709.2px">SP</div>
<svg class="abs" style="left:137.5px;top:736.7px" width="5" height="4" viewBox="0 0 5 4"><path d="M0.5 1h4L2.5 3z" fill="#555"/></svg>
<div class="abs nowrap sr" style="left:147px;top:733.2px">Show 1 reply</div>
<div class="abs chip" style="left:787.5px;top:696.7px;width:47.5px;background:#00c853">KPI</div>
<div class="abs dots" style="left:988px;top:707.5px"><i></i><i></i><i></i></div>
<div class="abs dots" style="left:1117.8px;top:707.5px"><i></i><i></i><i></i></div>
<div class="abs nowrap" style="left:1130px;top:703.5px;font-size:9px;line-height:9px;color:#222">/</div>
<div class="abs dots g" style="left:1138px;top:707.5px"><i></i><i></i><i></i></div>
<div class="abs nowrap td" style="left:1214px;top:703.5px">Kund - Pizza hämtad</div>
<div class="abs" style="left:1436px;top:704.0px;width:11.6px;height:1.3px;background:#555"></div>
<div class="abs" style="left:1436px;top:707.3px;width:11.6px;height:1.3px;background:#555"></div>
<div class="abs" style="left:1436px;top:710.6px;width:11.6px;height:1.3px;background:#555"></div>
<div class="abs" style="left:42px;top:749.9px;width:1421px;height:1px;background:#e3e3e3"></div>
<div class="abs" style="left:51px;top:782px;width:11px;height:1.3px;background:#505050"></div>
<div class="abs" style="left:51px;top:785px;width:11px;height:1.3px;background:#505050"></div>
<div class="abs nowrap td" style="left:98px;top:779.4px;width:8px;text-align:center">4</div>
<div class="abs" style="left:135px;top:753.6px;width:632px;height:58px;border:1px solid rgba(160,30,240,.75);border-bottom-width:1.5px;border-top:5px solid #aa1ff5;border-radius:6px;box-shadow:0 1px 1.5px rgba(0,0,0,.2)"></div>
<div class="abs nowrap ct" style="left:141px;top:769.4px">Som kund vill jag kunna betala med Klarna</div>
<svg class="abs" style="left:142.6px;top:794.8px" width="9.2" height="9.2" viewBox="0 0 24 24"><path fill="#555" d="M9 21h9c.83 0 1.54-.5 1.84-1.22l3.02-7.05c.09-.23.14-.47.14-.73v-2c0-1.1-.9-2-2-2h-6.31l.95-4.57.03-.32c0-.41-.17-.79-.44-1.06L14.17 1 7.58 7.59C7.22 7.95 7 8.45 7 9v10c0 1.1.9 2 2 2zM9 9l4.34-4.34L12 10h9v2l-3 7H9V9zM1 9h4v12H1z"/></svg>
<svg class="abs" style="left:160.4px;top:794.3px" width="9.2" height="9.2" viewBox="0 0 24 24"><path fill="#555" d="M15 3H6c-.83 0-1.54.5-1.84 1.22l-3.02 7.05c-.09.23-.14.47-.14.73v2c0 1.1.9 2 2 2h6.31l-.95 4.57-.03.32c0 .41.17.79.44 1.06L9.83 23l6.59-6.59c.36-.36.58-.86.58-1.41V5c0-1.1-.9-2-2-2zm0 12l-4.34 4.34L12 14H3v-2l3-7h9v10zm4-12h4v12h-4z"/></svg>
<div class="abs nowrap rp" style="left:176px;top:794.9px">Reply</div>
<svg class="abs" style="left:198.8px;top:794.6px" width="10" height="10" viewBox="0 0 24 24"><path fill="#555" d="M20 2H4c-1.1 0-2 .9-2 2v18l4-4h14c1.1 0 2-.9 2-2V4c0-1.1-.9-2-2-2zm0 14H6l-2 2V4h16v12z"/></svg>
<svg class="abs" style="left:213.5px;top:794.4px" width="10" height="10" viewBox="0 0 24 24"><path fill="#555" d="M16.5 6v11.5c0 2.21-1.79 4-4 4s-4-1.79-4-4V5c0-1.38 1.12-2.5 2.5-2.5s2.5 1.12 2.5 2.5v10.5c0 .55-.45 1-1 1s-1-.45-1-1V6H10v9.5c0 1.38 1.12 2.5 2.5 2.5s2.5-1.12 2.5-2.5V5c0-2.21-1.79-4-4-4S7 2.79 7 5v12.5c0 3.04 2.46 5.5 5.5 5.5s5.5-2.46 5.5-5.5V6h-1.5z"/></svg>
<svg class="abs" style="left:234.5px;top:794.4px" width="10" height="10" viewBox="0 0 24 24"><path fill="#555" d="M6 19c0 1.1.9 2 2 2h8c1.1 0 2-.9 2-2V7H6v12zM8 9h8v10H8V9zm7.5-5l-1-1h-5l-1 1H5v2h14V4z"/></svg>
<div class="abs av" style="left:751px;top:793.4px">SP</div>
<div class="abs chip" style="left:787.5px;top:772.6px;width:80.5px;background:#aa1ff5">User Story</div>
<div class="abs dots" style="left:988px;top:783.4px"><i></i><i></i><i></i></div>
<div class="abs dots" style="left:1117.8px;top:783.4px"><i></i><i></i><i></i></div>
<div class="abs nowrap" style="left:1130px;top:779.4px;font-size:9px;line-height:9px;color:#222">/</div>
<div class="abs dots g" style="left:1138px;top:783.4px"><i></i><i></i><i></i></div>
<div class="abs nowrap td" style="left:1214px;top:779.4px">Kund - Pizza beställd</div>
<div class="abs" style="left:1436px;top:780.0px;width:11.6px;height:1.3px;background:#555"></div>
<div class="abs" style="left:1436px;top:783.3px;width:11.6px;height:1.3px;background:#555"></div>
<div class="abs" style="left:1436px;top:786.6px;width:11.6px;height:1.3px;background:#555"></div>
<div class="abs" style="left:42px;top:815.7px;width:1421px;height:1px;background:#e3e3e3"></div>
<div class="abs" style="left:51px;top:848px;width:11px;height:1.3px;background:#505050"></div>
<div class="abs" style="left:51px;top:851px;width:11px;height:1.3px;background:#505050"></div>
<div class="abs nowrap td" style="left:98px;top:845.2px;width:8px;text-align:center">5</div>
<div class="abs" style="left:135px;top:819.4000000000001px;width:632px;height:58px;border:1px solid rgba(160,30,240,.75);border-bottom-width:1.5px;border-top:5px solid #aa1ff5;border-radius:6px;box-shadow:0 1px 1.5px rgba(0,0,0,.2)"></div>
<div class="abs nowrap ct" style="left:141px;top:835.2px">Som kund vill jag kunna betala med Swish</div>
<svg class="abs" style="left:142.6px;top:860.6px" width="9.2" height="9.2" viewBox="0 0 24 24"><path fill="#555" d="M9 21h9c.83 0 1.54-.5 1.84-1.22l3.02-7.05c.09-.23.14-.47.14-.73v-2c0-1.1-.9-2-2-2h-6.31l.95-4.57.03-.32c0-.41-.17-.79-.44-1.06L14.17 1 7.58 7.59C7.22 7.95 7 8.45 7 9v10c0 1.1.9 2 2 2zM9 9l4.34-4.34L12 10h9v2l-3 7H9V9zM1 9h4v12H1z"/></svg>
<svg class="abs" style="left:160.4px;top:860.1px" width="9.2" height="9.2" viewBox="0 0 24 24"><path fill="#555" d="M15 3H6c-.83 0-1.54.5-1.84 1.22l-3.02 7.05c-.09.23-.14.47-.14.73v2c0 1.1.9 2 2 2h6.31l-.95 4.57-.03.32c0 .41.17.79.44 1.06L9.83 23l6.59-6.59c.36-.36.58-.86.58-1.41V5c0-1.1-.9-2-2-2zm0 12l-4.34 4.34L12 14H3v-2l3-7h9v10zm4-12h4v12h-4z"/></svg>
<div class="abs nowrap rp" style="left:176px;top:860.7px">Reply</div>
<svg class="abs" style="left:198.8px;top:860.4000000000001px" width="10" height="10" viewBox="0 0 24 24"><path fill="#555" d="M20 2H4c-1.1 0-2 .9-2 2v18l4-4h14c1.1 0 2-.9 2-2V4c0-1.1-.9-2-2-2zm0 14H6l-2 2V4h16v12z"/></svg>
<svg class="abs" style="left:213.5px;top:860.2px" width="10" height="10" viewBox="0 0 24 24"><path fill="#555" d="M16.5 6v11.5c0 2.21-1.79 4-4 4s-4-1.79-4-4V5c0-1.38 1.12-2.5 2.5-2.5s2.5 1.12 2.5 2.5v10.5c0 .55-.45 1-1 1s-1-.45-1-1V6H10v9.5c0 1.38 1.12 2.5 2.5 2.5s2.5-1.12 2.5-2.5V5c0-2.21-1.79-4-4-4S7 2.79 7 5v12.5c0 3.04 2.46 5.5 5.5 5.5s5.5-2.46 5.5-5.5V6h-1.5z"/></svg>
<svg class="abs" style="left:234.5px;top:860.2px" width="10" height="10" viewBox="0 0 24 24"><path fill="#555" d="M6 19c0 1.1.9 2 2 2h8c1.1 0 2-.9 2-2V7H6v12zM8 9h8v10H8V9zm7.5-5l-1-1h-5l-1 1H5v2h14V4z"/></svg>
<div class="abs av" style="left:751px;top:859.2px">NV</div>
<div class="abs chip" style="left:787.5px;top:838.4000000000001px;width:80.5px;background:#aa1ff5">User Story</div>
<div class="abs dots" style="left:988px;top:849.2px"><i></i><i></i><i></i></div>
<div class="abs dots" style="left:1117.8px;top:849.2px"><i></i><i></i><i></i></div>
<div class="abs nowrap" style="left:1130px;top:845.2px;font-size:9px;line-height:9px;color:#222">/</div>
<div class="abs dots g" style="left:1138px;top:849.2px"><i></i><i></i><i></i></div>
<div class="abs nowrap td" style="left:1214px;top:845.2px">Kund - Pizza beställd</div>
<div class="abs" style="left:1436px;top:846.0px;width:11.6px;height:1.3px;background:#555"></div>
<div class="abs" style="left:1436px;top:849.3px;width:11.6px;height:1.3px;background:#555"></div>
<div class="abs" style="left:1436px;top:852.6px;width:11.6px;height:1.3px;background:#555"></div>
<div class="abs" style="left:1294px;top:890px;width:170px;height:19px;background:#d6d7d7;border-radius:5px;box-shadow:0 1px 1px rgba(0,0,0,.18)"></div>
<div class="abs nowrap btxt" style="left:1305.5px;top:894.5px">SELECT AN EVENT TO ADD CARDS</div>
</body></html>
